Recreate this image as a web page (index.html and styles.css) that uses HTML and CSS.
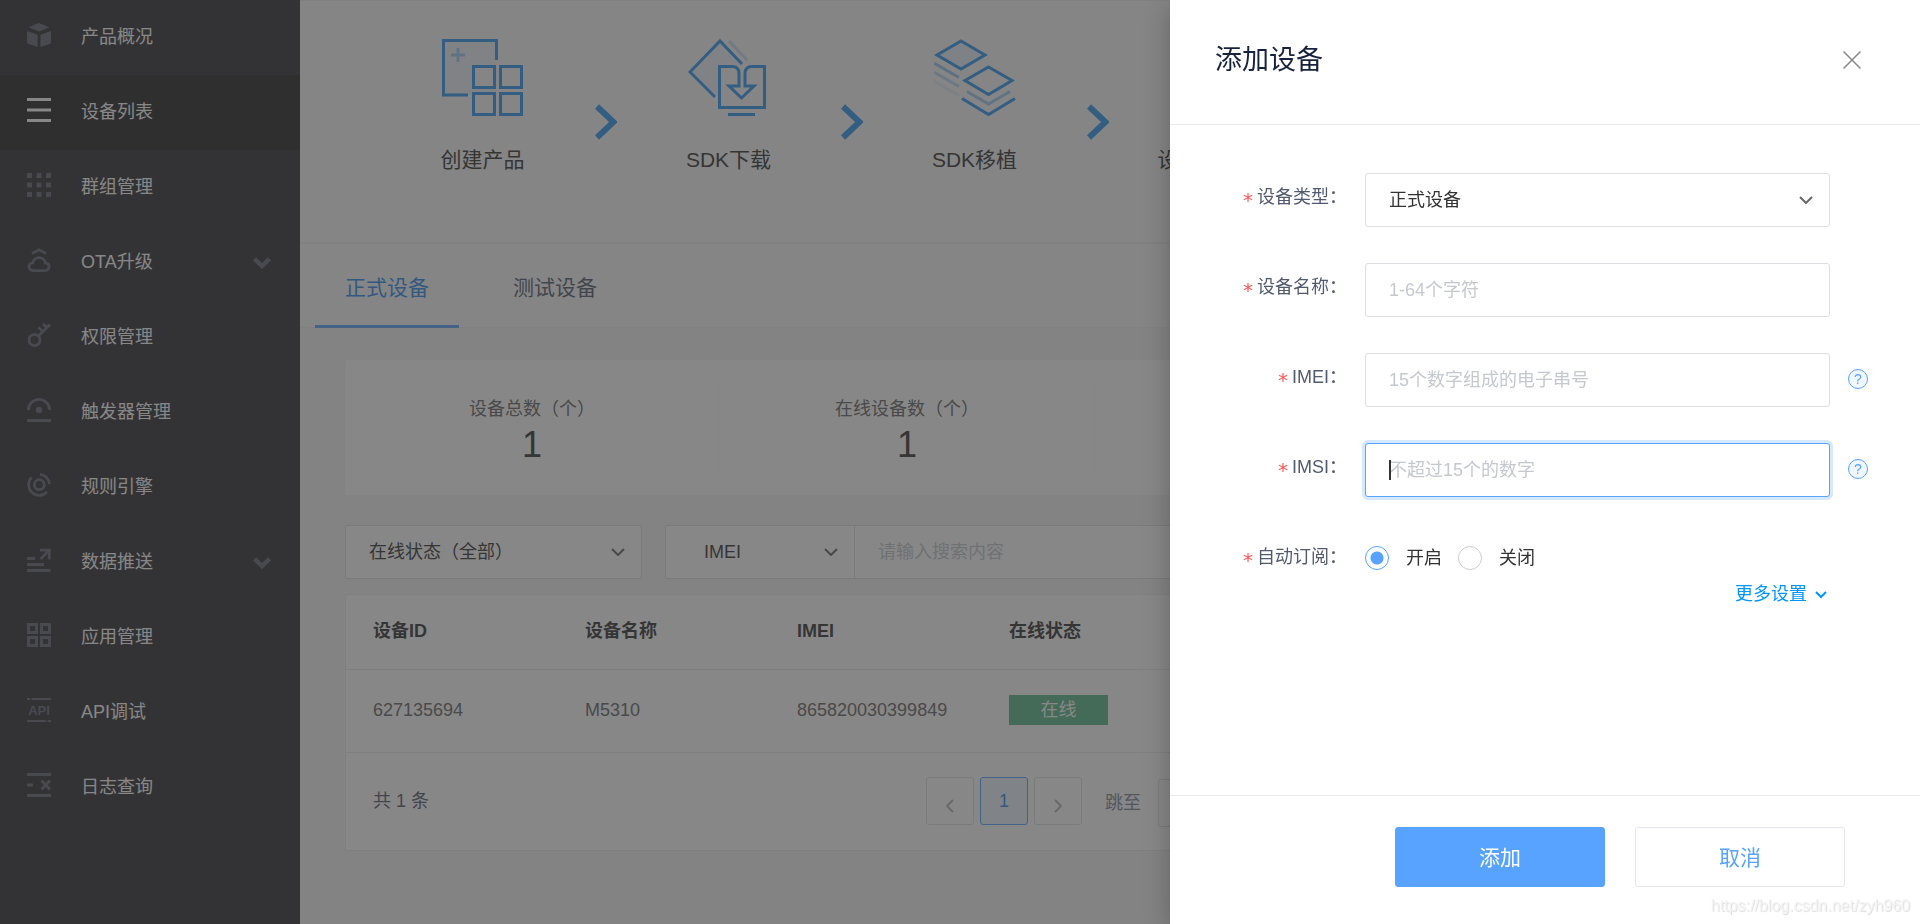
FILE: index.html
```html
<!DOCTYPE html>
<html lang="zh-CN">
<head>
<meta charset="utf-8">
<title>设备列表</title>
<link rel="stylesheet" href="styles.css">
</head>
<body>
<div class="app">
  <nav class="sidebar">
    <a class="nav-item" href="#">
      <svg class="nav-icon" viewBox="0 0 24 24" fill="currentColor"><path d="M12 0l10.500 4.200L12 8.500 1.500 4.200z"/><path d="M1 8.300Q0 8 0 9v10.500q0 .800.800 1.200L10.600 24V12.500q0-.700-.700-1zM23 8.300q1-.300 1 .700v10.500q0 .800-.800 1.200L13.400 24V12.500q0-.700.700-1z"/></svg>
      <span class="nav-text">产品概况</span>
    </a>
    <a class="nav-item nav-item-active" href="#">
      <svg class="nav-icon" viewBox="0 0 24 24" fill="currentColor"><path d="M0 0h24v3H0zM0 10.500h24v3H0zM0 21h24v3H0z"/></svg>
      <span class="nav-text">设备列表</span>
    </a>
    <a class="nav-item" href="#">
      <svg class="nav-icon" viewBox="0 0 24 24" fill="currentColor"><path d="M0 0h5v5H0zM9.500 0h5v5h-5zM19 0h5v5h-5zM0 9.500h5v5H0zM9.500 9.500h5v5h-5zM19 9.500h5v5h-5zM0 19h5v5H0zM9.500 19h5v5h-5zM19 19h5v5h-5z"/></svg>
      <span class="nav-text">群组管理</span>
    </a>
    <a class="nav-item" href="#">
      <svg class="nav-icon" viewBox="0 0 24 24" fill="none" stroke="currentColor" stroke-width="2.800"><path d="M5 5.500L12 1.800l7 3.700"/><path d="M6 22.600h12a3.900 3.900 0 0 0 .3-7.800a6.400 6.400 0 0 0-12.600 0a3.900 3.900 0 0 0 .3 7.800z"/></svg>
      <span class="nav-text">OTA升级</span>
      <svg class="nav-arrow" viewBox="0 0 18 12" fill="none" stroke="currentColor" stroke-width="4.500"><path d="M1.500 1.800L9 9l7.500-7.200"/></svg>
    </a>
    <a class="nav-item" href="#">
      <svg class="nav-icon" viewBox="0 0 24 24" fill="none" stroke="currentColor" stroke-width="3"><circle cx="7.500" cy="17" r="5.500"/><path d="M11.500 13L23 1.500M16 8.500l-4.500-4M20.500 5l-4.500-4"/></svg>
      <span class="nav-text">权限管理</span>
    </a>
    <a class="nav-item" href="#">
      <svg class="nav-icon" viewBox="0 0 24 24" fill="none" stroke="currentColor" stroke-width="2.800"><path d="M1.400 12a10.600 10.600 0 0 1 21.200 0M0 22.500h24"/><circle cx="12" cy="12" r="3.200" fill="currentColor" stroke="none"/></svg>
      <span class="nav-text">触发器管理</span>
    </a>
    <a class="nav-item" href="#">
      <svg class="nav-icon" viewBox="0 0 24 24" fill="none" stroke="currentColor" stroke-width="2.800"><circle cx="12.300" cy="11.700" r="5"/><path d="M4.500 4.500A10.600 10.600 0 0 0 20 19M13 1.400A10.600 10.600 0 0 1 22.600 11"/></svg>
      <span class="nav-text">规则引擎</span>
    </a>
    <a class="nav-item" href="#">
      <svg class="nav-icon" viewBox="0 0 24 24" fill="none" stroke="currentColor" stroke-width="2.800"><path d="M0 10.500h8M0 16.500h17M0 22.500h23.500M13 2.200h9.300v9.300M21.500 3L13.500 11"/></svg>
      <span class="nav-text">数据推送</span>
      <svg class="nav-arrow" viewBox="0 0 18 12" fill="none" stroke="currentColor" stroke-width="4.500"><path d="M1.500 1.800L9 9l7.500-7.200"/></svg>
    </a>
    <a class="nav-item" href="#">
      <svg class="nav-icon" viewBox="0 0 24 24" fill="none" stroke="currentColor" stroke-width="3"><path d="M1.500 1.500h8v8h-8zM14.500 1.500h8v8h-8zM1.500 14.500h8v8h-8zM14.500 14.500h8v8h-8z"/></svg>
      <span class="nav-text">应用管理</span>
    </a>
    <a class="nav-item" href="#">
      <svg class="nav-icon" viewBox="0 0 24 24" fill="currentColor"><path d="M0 0h3v2H0zM4.500 0H24v2H4.500zM0 22h19v2H0zM20.500 22H24v2h-3.500z"/><text class="api-mark" x="12" y="17" text-anchor="middle">API</text></svg>
      <span class="nav-text">API调试</span>
    </a>
    <a class="nav-item" href="#">
      <svg class="nav-icon" viewBox="0 0 24 24" fill="none" stroke="currentColor" stroke-width="2.800"><path d="M0 1.500h24M0 22.500h24M0 12h6M14.500 7.500l8.500 9M23 7.500l-8.500 9"/></svg>
      <span class="nav-text">日志查询</span>
    </a>
  </nav>

  <main class="main">
    <section class="steps">
      <div class="step">
        <svg class="step-icon" viewBox="0 0 82 78" fill="none" stroke="currentColor" stroke-width="3"><path d="M1.500 1.500h53v54h-53z" fill="#57a3ff" fill-opacity=".08" stroke="none"/><path d="M26 56H1.500V1.500h53V21"/><path d="M16 9v14M9 16h14" opacity=".4"/><path class="step-tile" d="M31.500 27.500h21v21h-21zM58.500 27.500h21v21h-21zM31.500 54.500h21v21h-21zM58.500 54.500h21v21h-21z"/></svg>
        <span>创建产品</span>
      </div>
      <svg class="step-arrow" viewBox="0 0 22 36" fill="none" stroke="currentColor" stroke-width="6"><path d="M2 2.500L18.500 18 2 33.500"/></svg>
      <div class="step">
        <svg class="step-icon" viewBox="0 0 82 78" fill="none" stroke="currentColor" stroke-width="3"><path d="M32 2L2 33l24 24h4V27h20l2-2z" fill="#57a3ff" fill-opacity=".08" stroke="none"/><path d="M27 58L2 33 32 2l22 23"/><path d="M41 2l18 19" opacity=".25"/><path d="M44 27.500H31.500v41h45v-41H64q-7 0-7 7V47h9L53.500 59 41 47h10V34.500q0-7-7-7z"/><path d="M40 75.500h27"/></svg>
        <span>SDK下载</span>
      </div>
      <svg class="step-arrow" viewBox="0 0 22 36" fill="none" stroke="currentColor" stroke-width="6"><path d="M2 2.500L18.500 18 2 33.500"/></svg>
      <div class="step">
        <svg class="step-icon" viewBox="0 0 82 78" fill="none" stroke="currentColor" stroke-width="3"><path d="M27 2l24 14-24 14L3 16z" fill="#57a3ff" fill-opacity=".1"/><path d="M54.500 28L78 41.500 54.500 55.500 31 41.500z"/><path d="M0 24l25 14.500" opacity=".5"/><path d="M0 33l25 14.500" opacity=".3"/><path d="M0 42l25 14.500" opacity=".1"/><path d="M33 52.500L54.500 65 76 52.500" opacity=".45"/><path d="M28 59.500l26.500 16L81 59.500"/></svg>
        <span>SDK移植</span>
      </div>
      <svg class="step-arrow" viewBox="0 0 22 36" fill="none" stroke="currentColor" stroke-width="6"><path d="M2 2.500L18.500 18 2 33.500"/></svg>
      <div class="step">
        <div class="step-icon"></div>
        <span>设备接入平台</span>
      </div>
    </section>

    <div class="tabs" role="tablist">
      <button class="tab tab-active" type="button" role="tab">正式设备</button>
      <button class="tab" type="button" role="tab">测试设备</button>
    </div>

    <div class="content">
      <section class="stats">
        <div class="stat"><span>设备总数（个）</span><strong>1</strong></div>
        <div class="stat"><span>在线设备数（个）</span><strong>1</strong></div>
        <div class="stat"></div>
        <div class="stat"></div>
      </section>

      <div class="filters">
        <div class="select-box filter-status">
          <select class="field" aria-label="在线状态"><option>在线状态（全部）</option></select>
          <svg class="chevron" viewBox="0 0 14 8" fill="none" stroke="currentColor" stroke-width="2"><path d="M1 1l6 6 6-6"/></svg>
        </div>
        <div class="search">
          <div class="select-box filter-key">
            <select class="field" aria-label="搜索类型"><option>IMEI</option></select>
            <svg class="chevron" viewBox="0 0 14 8" fill="none" stroke="currentColor" stroke-width="2"><path d="M1 1l6 6 6-6"/></svg>
          </div>
          <input class="field filter-text" type="text" placeholder="请输入搜索内容" aria-label="搜索内容">
        </div>
      </div>

      <section class="panel">
        <table class="table">
          <thead><tr><th>设备ID</th><th>设备名称</th><th>IMEI</th><th>在线状态</th><th class="rest"></th></tr></thead>
          <tbody><tr><td>627135694</td><td>M5310</td><td>865820030399849</td><td><span class="badge">在线</span></td><td></td></tr></tbody>
        </table>
        <div class="pager">
          <span class="total">共 1 条</span>
          <div class="pages">
            <button class="page" type="button" aria-label="上一页"><svg class="page-arrow" viewBox="0 0 8 14" fill="none" stroke="currentColor" stroke-width="2"><path d="M7 1L1 7l6 6"/></svg></button>
            <button class="page page-active" type="button">1</button>
            <button class="page" type="button" aria-label="下一页"><svg class="page-arrow" viewBox="0 0 8 14" fill="none" stroke="currentColor" stroke-width="2"><path d="M1 1l6 6-6 6"/></svg></button>
          </div>
          <div class="jump">
            <label for="jump">跳至</label>
            <input class="jump-input" id="jump" type="text">
          </div>
        </div>
      </section>
    </div>
  </main>
</div>

<div class="mask"></div>

<aside class="drawer" role="dialog" aria-labelledby="drawer-title">
  <header class="drawer-head">
    <h2 class="drawer-title" id="drawer-title">添加设备</h2>
    <button class="close" type="button" aria-label="关闭"><svg class="close-icon" viewBox="0 0 18 18" fill="none" stroke="currentColor" stroke-width="1.500"><path d="M.5.5l17 17M17.500.5l-17 17"/></svg></button>
  </header>
  <form class="form">
    <div class="row">
      <label class="label" for="type">设备类型：</label>
      <div class="select-box control">
        <select class="field" id="type"><option>正式设备</option></select>
        <svg class="chevron" viewBox="0 0 14 8" fill="none" stroke="currentColor" stroke-width="2"><path d="M1 1l6 6 6-6"/></svg>
      </div>
    </div>
    <div class="row">
      <label class="label" for="name">设备名称：</label>
      <input class="field control" id="name" type="text" placeholder="1-64个字符">
    </div>
    <div class="row">
      <label class="label" for="imei">IMEI：</label>
      <input class="field control" id="imei" type="text" placeholder="15个数字组成的电子串号">
      <button class="help" type="button" aria-label="IMEI 说明">?</button>
    </div>
    <div class="row">
      <label class="label" for="imsi">IMSI：</label>
      <div class="caret-box control">
        <input class="field" id="imsi" type="text" placeholder="不超过15个的数字" autofocus>
      </div>
      <button class="help" type="button" aria-label="IMSI 说明">?</button>
    </div>
    <div class="row row-radio" role="radiogroup" aria-labelledby="sub-label">
      <span class="label" id="sub-label">自动订阅：</span>
      <label class="choice"><input class="radio" type="radio" name="sub" checked>开启</label>
      <label class="choice"><input class="radio" type="radio" name="sub">关闭</label>
    </div>
    <a class="more" href="#">更多设置<svg class="more-icon" viewBox="0 0 12 8" fill="none" stroke="currentColor" stroke-width="2"><path d="M1 1l5 5 5-5"/></svg></a>
  </form>
  <footer class="drawer-foot">
    <button class="btn btn-primary" type="submit">添加</button>
    <button class="btn" type="button">取消</button>
  </footer>
  <span class="watermark">https://blog.csdn.net/zyh960</span>
</aside>
</body>
</html>
```

FILE: styles.css
```css
* {
  box-sizing: border-box;
}

body {
  margin: 0;
  font: 18px/27px "Liberation Sans", "Noto Sans CJK SC", sans-serif;
  color: #515a6e;
  background: #f5f5f5;
  overflow: hidden;
}

button,
input,
select {
  font: inherit;
  color: inherit;
}

a {
  text-decoration: none;
}

.app {
  display: flex;
  min-height: 100vh;
}

/* Sidebar */
.sidebar {
  flex: none;
  width: 300px;
  background: #2d2d32;
}

.nav-item {
  display: flex;
  align-items: center;
  gap: 30px;
  height: 75px;
  padding: 0 29px 5px 27px;
  color: #fff;
}

.nav-item-active {
  background: #232323;
}

.nav-icon {
  flex: none;
  width: 24px;
  height: 24px;
  color: #646675;
}

.nav-item-active .nav-icon {
  color: #fff;
}

.nav-text {
  margin-top: 5px;
}

.nav-arrow {
  width: 18px;
  height: 12px;
  margin: 6px 0 0 auto;
  color: #646675;
}

.api-mark {
  font: bold 13px "Liberation Sans", sans-serif;
}

/* Main column */
.main {
  flex: 1;
  min-width: 0;
  overflow: hidden;
}

.steps {
  display: flex;
  height: 244px;
  padding: 38px 0 0 71px;
  background: #fafafa;
  border-top: 1px solid #ededed;
  border-bottom: 2px solid #f0f0f0;
}

.step {
  flex: none;
  display: flex;
  flex-direction: column;
  align-items: center;
  gap: 27px;
  width: 223px;
  font-size: 21px;
  line-height: 32px;
  color: #333;
}

.step-icon {
  width: 82px;
  height: 78px;
  color: #2f96f0;
}

.step-tile {
  fill: #fafafa;
}

.step-arrow {
  flex: none;
  width: 22px;
  height: 36px;
  margin: 65px 0 0 1px;
  color: #2f96f0;
}

.tabs {
  display: flex;
  gap: 24px;
  height: 84px;
  padding-left: 15px;
  background: #fafafa;
  border-bottom: 1px solid #f0f0f0;
}

.tab {
  height: 84px;
  padding: 6px 30px 0;
  border: 0;
  border-bottom: 3px solid transparent;
  background: none;
  font-size: 21px;
}

.tab-active {
  color: #2d8cf0;
  border-bottom-color: #57a3ff;
}

.content {
  padding: 32px 75px 75px 45px;
}

.stats {
  display: grid;
  grid-template-columns: repeat(4, 1fr);
  height: 135px;
  padding: 20px 0;
  background: #fff;
  border-radius: 3px;
}

.stat {
  display: flex;
  flex-direction: column;
  align-items: center;
  gap: 4px;
  padding-top: 16px;
  border-right: 1px solid #fafafa;
  color: #666;
}

.stat strong {
  font-size: 36px;
  font-weight: 400;
  line-height: 36px;
  color: #333;
}

.filters {
  display: flex;
  gap: 23px;
  margin: 30px 0 15px;
}

.field {
  width: 100%;
  height: 54px;
  padding: 0 23px;
  border: 1px solid #dcdee2;
  border-radius: 3px;
  background: #fff;
  color: #333;
  outline: 0;
  appearance: none;
}

.field::placeholder {
  color: #c5c8ce;
  opacity: 1;
}

.field:focus {
  border-color: #57a3ff;
  box-shadow: 0 0 0 3px rgba(45, 140, 240, .2);
}

.select-box {
  position: relative;
}

.chevron {
  position: absolute;
  top: 23px;
  right: 17px;
  width: 14px;
  height: 8px;
  color: #666;
  pointer-events: none;
}

.filter-status {
  width: 297px;
}

.search {
  flex: 1;
  display: flex;
}

.filter-key {
  flex: none;
  width: 190px;
}

.filter-key .field {
  padding-left: 38px;
  border-radius: 3px 0 0 3px;
}

.filter-text {
  margin-left: -1px;
  border-radius: 0 3px 3px 0;
}

.panel {
  background: #fff;
  border: 1px solid #e8eaec;
}

.table {
  width: 100%;
  border-collapse: collapse;
  table-layout: fixed;
}

.table th,
.table td {
  width: 212px;
  padding: 0 0 0 27px;
  text-align: left;
  border-bottom: 1px solid #e8eaec;
}

.table th {
  height: 74px;
  color: #333;
}

.table td {
  height: 83px;
  padding-bottom: 1px;
  color: #666;
}

.table .rest {
  width: auto;
}

.badge {
  display: block;
  width: 99px;
  height: 30px;
  line-height: 30px;
  text-align: center;
  color: #fff;
  background: #58b68a;
}

.pager {
  display: flex;
  align-items: center;
  height: 97px;
  padding-left: 27px;
}

.total {
  width: 553px;
}

.pages {
  display: flex;
  gap: 6px;
}

.page {
  width: 48px;
  height: 48px;
  padding: 0;
  border: 1px solid #dcdee2;
  border-radius: 3px;
  background: #fff;
  color: #b4b4b4;
}

.page-active {
  color: #2d8cf0;
  border-color: #57a3ff;
  background: #eef5ff;
}

.page-arrow {
  width: 8px;
  height: 14px;
  margin-top: 8px;
  vertical-align: middle;
}

.jump {
  display: flex;
  align-items: center;
  gap: 17px;
  margin: 4px 0 0 23px;
  color: #808695;
}

.jump-input {
  width: 75px;
  height: 48px;
  border: 1px solid #dcdee2;
  border-radius: 3px;
  background: #fff;
}

/* Drawer */
.mask {
  position: fixed;
  inset: 0;
  background: rgba(55, 55, 55, .6);
}

.drawer {
  position: fixed;
  inset: 0 0 0 auto;
  display: flex;
  flex-direction: column;
  width: 750px;
  max-width: 100%;
  background: #fff;
  box-shadow: 0 6px 24px rgba(0, 0, 0, .25);
}

.drawer-head {
  display: flex;
  align-items: center;
  justify-content: space-between;
  height: 125px;
  padding: 0 59px 4px 45px;
  border-bottom: 1px solid #e8e8e8;
}

.drawer-title {
  margin: 0;
  font-size: 27px;
  line-height: 40px;
  font-weight: 400;
  color: #17233d;
}

.close {
  display: flex;
  padding: 0;
  border: 0;
  background: none;
  color: #888;
}

.close-icon {
  width: 18px;
  height: 18px;
}

.form {
  flex: 1;
  display: flex;
  flex-direction: column;
  gap: 36px;
  padding: 48px 45px 0;
}

.row {
  display: flex;
  align-items: center;
}

.label {
  flex: none;
  width: 132px;
  margin-right: 18px;
  padding-bottom: 6px;
  text-align: right;
}

.label::before {
  content: "*";
  margin-right: 4px;
  font-family: "DejaVu Sans", sans-serif;
  font-size: 20px;
  line-height: 18px;
  vertical-align: -4px;
  color: #ff5555;
}

.control {
  flex: none;
  width: 465px;
}

/* Text cursor of the focused box */
.caret-box {
  position: relative;
}

.caret-box .field {
  display: block;
  caret-color: transparent;
}

.caret-box::after {
  content: "";
  position: absolute;
  top: 17px;
  left: 24px;
  width: 2px;
  height: 20px;
  background: #333;
}

.help {
  width: 20px;
  height: 20px;
  margin: 0 0 3px 18px;
  padding: 0;
  border: 1px solid #57a3ff;
  border-radius: 50%;
  background: #f0f7ff;
  font-size: 14px;
  line-height: 18px;
  color: #57a3ff;
}

.row-radio {
  height: 54px;
  padding-bottom: 4px;
}

.row-radio .label {
  padding-bottom: 2px;
}

.choice {
  display: flex;
  align-items: center;
  gap: 17px;
  margin-right: 16px;
  color: #333;
}

.radio {
  width: 24px;
  height: 24px;
  margin: 0;
  border: 1px solid #c8ccd2;
  border-radius: 50%;
  appearance: none;
}

.radio:checked {
  border-color: #57a3ff;
  background: radial-gradient(circle, #57a3ff 6px, transparent 7px);
}

.more {
  display: flex;
  align-items: center;
  align-self: flex-end;
  gap: 8px;
  margin: -42px 48px 0 0;
  color: #0096ff;
}

.more-icon {
  width: 12px;
  height: 8px;
}

.drawer-foot {
  display: flex;
  justify-content: flex-end;
  gap: 30px;
  height: 129px;
  padding: 31px 75px 0;
  border-top: 1px solid #e8eaec;
}

.btn {
  width: 210px;
  height: 60px;
  border: 1px solid #e4e7ed;
  border-radius: 3px;
  background: #fff;
  font-size: 21px;
  color: #57a3ff;
}

.btn-primary {
  border-color: #57a3ff;
  background: #57a3ff;
  color: #fff;
}

.watermark {
  position: absolute;
  right: 10px;
  bottom: 6px;
  font-size: 16px;
  line-height: 24px;
  color: #f4f4f4;
  text-shadow: 1px 1px 1px #ddd;
}
```
